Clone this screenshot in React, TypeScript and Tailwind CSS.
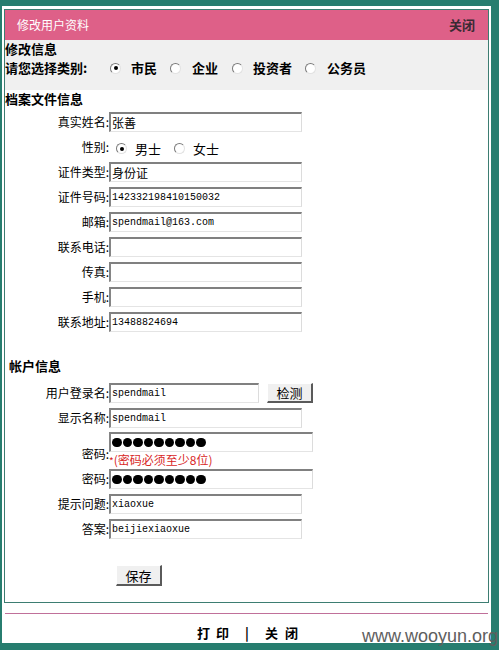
import type { ReactNode } from "react";

const inputBox =
  "h-[20px] bg-white border border-t-2 border-l-2 border-t-[#808080] border-l-[#858585] border-r-[#dcdcdc] border-b-[#e4e4e4] pl-[1px] outline-none text-black";
const mono = "font-['Liberation_Mono','Noto_Sans_CJK_SC',monospace] text-[10px]";
const cjk = "font-['Noto_Sans_CJK_SC',sans-serif] text-[12px]";
const btn =
  "flex items-center justify-center bg-[#f0f0f0] border border-t-white border-l-white border-r-2 border-b-2 border-r-[#5a5a5a] border-b-[#5a5a5a] text-[13px] leading-none";

const Radio = ({ checked = false }: { checked?: boolean }) => (
  <span className="inline-flex items-center justify-center w-[11px] h-[11px] rounded-full bg-white border border-t-[#7a7a7a] border-l-[#7a7a7a] border-r-[#e2e2e2] border-b-[#e2e2e2]">
    {checked && <span className="w-[4px] h-[4px] rounded-full bg-black" />}
  </span>
);

const Row = ({ label, children }: { label: string; children: ReactNode }) => (
  <div className="flex items-center h-[20px]">
    <div className="w-[104px] text-right text-[12px] leading-[20px]">{label}:</div>
    {children}
  </div>
);

const Field = ({ value = "", zh = false, w = "w-[193px]" }: { value?: string; zh?: boolean; w?: string }) => (
  <input readOnly value={value} className={`${inputBox} ${w} ${zh ? cjk : mono}`} />
);

const Dots = () => (
  <div className={`${inputBox} w-[204px] flex items-center gap-[1px] pl-[1px]`}>
    {Array.from({ length: 9 }).map((_, i) => (
      <span key={i} className="w-[9.5px] h-[9.5px] rounded-full bg-black" />
    ))}
  </div>
);

export default function App() {
  return (
    <div className="relative w-[499px] h-[650px] bg-[#277d6f] overflow-hidden font-['Noto_Sans_CJK_SC',sans-serif] text-[12px] text-black">
      <div className="ml-[2px] mt-[6px] w-[489px] h-[637px] bg-white pt-[3px] pl-[2px]">
        {/* main box */}
        <div className="w-[485px] border border-[#3d7d72]">
          <div className="h-[30px] bg-[#de6088] flex items-center justify-between pl-[12px] pr-[13px]">
            <span className="text-white text-[12px]">修改用户资料</span>
            <span className="font-bold text-[#3a2a33] text-[13px]">关闭</span>
          </div>

          <div className="h-[50px] bg-[#f0f0f0] font-bold text-[13px]">
            <div className="h-[18px] leading-[18px]">修改信息</div>
            <div className="mt-[1px] h-[18px] flex items-center">
              <span className="w-[105px]">请您选择类别:</span>
              <Radio checked />
              <span className="ml-[10px] mr-[13px]">市民</span>
              <Radio />
              <span className="ml-[11px] mr-[14px]">企业</span>
              <Radio />
              <span className="ml-[10px] mr-[13px]">投资者</span>
              <Radio />
              <span className="ml-[11px]">公务员</span>
            </div>
          </div>

          <div className="h-[18px] leading-[18px] font-bold text-[13px]">档案文件信息</div>

          <div className="mt-[4px] flex flex-col gap-[5px]">
            <Row label="真实姓名">
              <Field value="张善" zh />
            </Row>
            <Row label="性别">
              <div className="flex items-center ml-[7px] text-[13px] mt-[3px]">
                <Radio checked />
                <span className="ml-[8px] mr-[13px]">男士</span>
                <Radio />
                <span className="ml-[8px]">女士</span>
              </div>
            </Row>
            <Row label="证件类型">
              <Field value="身份证" zh />
            </Row>
            <Row label="证件号码">
              <Field value="142332198410150032" />
            </Row>
            <Row label="邮箱">
              <Field value="spendmail@163.com" />
            </Row>
            <Row label="联系电话">
              <Field />
            </Row>
            <Row label="传真">
              <Field />
            </Row>
            <Row label="手机">
              <Field />
            </Row>
            <Row label="联系地址">
              <Field value="13488824694" />
            </Row>
          </div>

          <div className="mt-[25px] pl-[4px] h-[18px] leading-[18px] font-bold text-[13px]">帐户信息</div>

          <div className="mt-[8px]">
            <Row label="用户登录名">
              <Field value="spendmail" w="w-[150px]" />
              <button className={`${btn} ml-[8px] w-[46px] h-[20px]`}>检测</button>
            </Row>
            <div className="mt-[5px]">
              <Row label="显示名称">
                <Field value="spendmail" />
              </Row>
            </div>
            <div className="mt-[4px] flex items-center">
              <div className="w-[104px] text-right text-[12px] leading-[20px] mt-[8px]">密码:</div>
              <div className="flex flex-col">
                <Dots />
                <div className="h-[16px] leading-[16px] text-[#d82626] text-[12px]">
                  <span className="text-[10px]">*</span>(密码必须至少8位)
                </div>
              </div>
            </div>
            <div className="mt-[1px]">
              <Row label="密码">
                <Dots />
              </Row>
            </div>
            <div className="mt-[5px]">
              <Row label="提示问题">
                <Field value="xiaoxue" />
              </Row>
            </div>
            <div className="mt-[5px]">
              <Row label="答案">
                <Field value="beijiexiaoxue" />
              </Row>
            </div>
          </div>

          <div className="mt-[26px] pb-[16px] pl-[111px]">
            <button className={`${btn} w-[46px] h-[21px]`}>保存</button>
          </div>
        </div>

        <div className="mt-[10px] ml-[1px] w-[483px] h-[1px] bg-[#c0709a]" />

        <div className="mt-[10px] h-[18px] flex items-center justify-center font-bold text-[13px]">
          <span>打</span>
          <span className="ml-[6px]">印</span>
          <span className="mx-[16px]">|</span>
          <span>关</span>
          <span className="ml-[7px]">闭</span>
        </div>
      </div>

      <div className="absolute left-[362px] top-[627px] font-['Liberation_Sans',sans-serif] text-[18px] leading-[18px] text-[#5e5e5e]">
        www.wooyun.org
      </div>
    </div>
  );
}
